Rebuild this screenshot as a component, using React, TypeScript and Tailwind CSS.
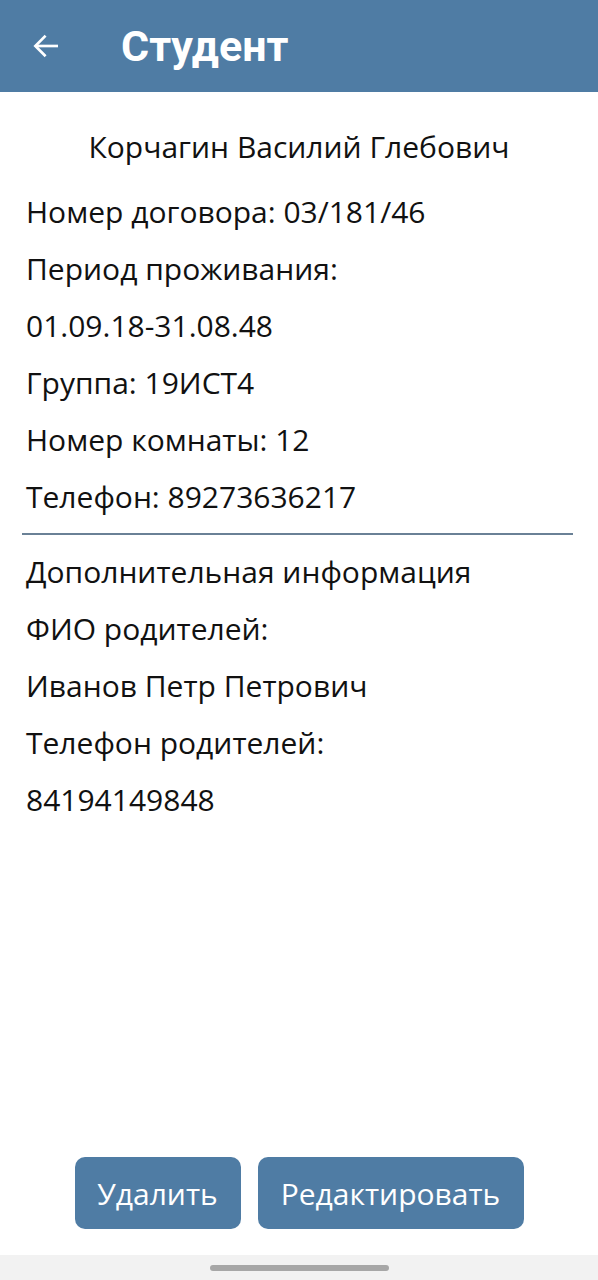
import React from "react";

const rows = [
  "Номер договора: 03/181/46",
  "Период проживания:",
  "01.09.18-31.08.48",
  "Группа: 19ИСТ4",
  "Номер комнаты: 12",
  "Телефон: 89273636217",
];

const extra = [
  "Дополнительная информация",
  "ФИО родителей:",
  "Иванов Петр Петрович",
  "Телефон родителей:",
  "84194149848",
];

export default function App() {
  return (
    <div className="w-[598px] h-[1280px] bg-white flex flex-col font-['Open_Sans',sans-serif] text-[#111]">
      <header className="h-[92px] bg-[#4f7ca4] flex items-center shrink-0">
        <svg width="32" height="32" viewBox="0 0 24 24" className="ml-[30px]" fill="none" stroke="white" strokeWidth="2" strokeLinecap="square">
          <path d="M20 12H5" />
          <path d="M11 5l-7 7 7 7" />
        </svg>
        <h1 className="ml-[59px] text-white text-[43px] font-bold font-['Roboto',sans-serif] leading-none">Студент</h1>
      </header>

      <main className="flex-1 flex flex-col px-[26px] pt-[26px]">
        <p className="text-center text-[30px] leading-[57px]">Корчагин Василий Глебович</p>
        <div className="mt-[8px] flex flex-col">
          {rows.map((r) => (
            <p key={r} className="text-[30px] leading-[57px]">{r}</p>
          ))}
        </div>
        <div className="mt-[8px] ml-[-4px] mr-[-1px] h-[2px] bg-[#6a8196]" />
        <div className="mt-[8px] flex flex-col">
          {extra.map((r) => (
            <p key={r} className="text-[30px] leading-[57px]">{r}</p>
          ))}
        </div>

        <div className="mt-auto mb-[26px] flex justify-center gap-[17px]">
          <button className="w-[166px] h-[72px] rounded-[10px] bg-[#4f7ca4] text-white text-[30px]">Удалить</button>
          <button className="w-[266px] h-[72px] rounded-[10px] bg-[#4f7ca4] text-white text-[30px]">Редактировать</button>
        </div>
      </main>

      <div className="h-[25px] bg-[#f2f2f2] flex items-center justify-center shrink-0">
        <div className="w-[179px] h-[6px] rounded-full bg-[#a7a7a7]" />
      </div>
    </div>
  );
}
